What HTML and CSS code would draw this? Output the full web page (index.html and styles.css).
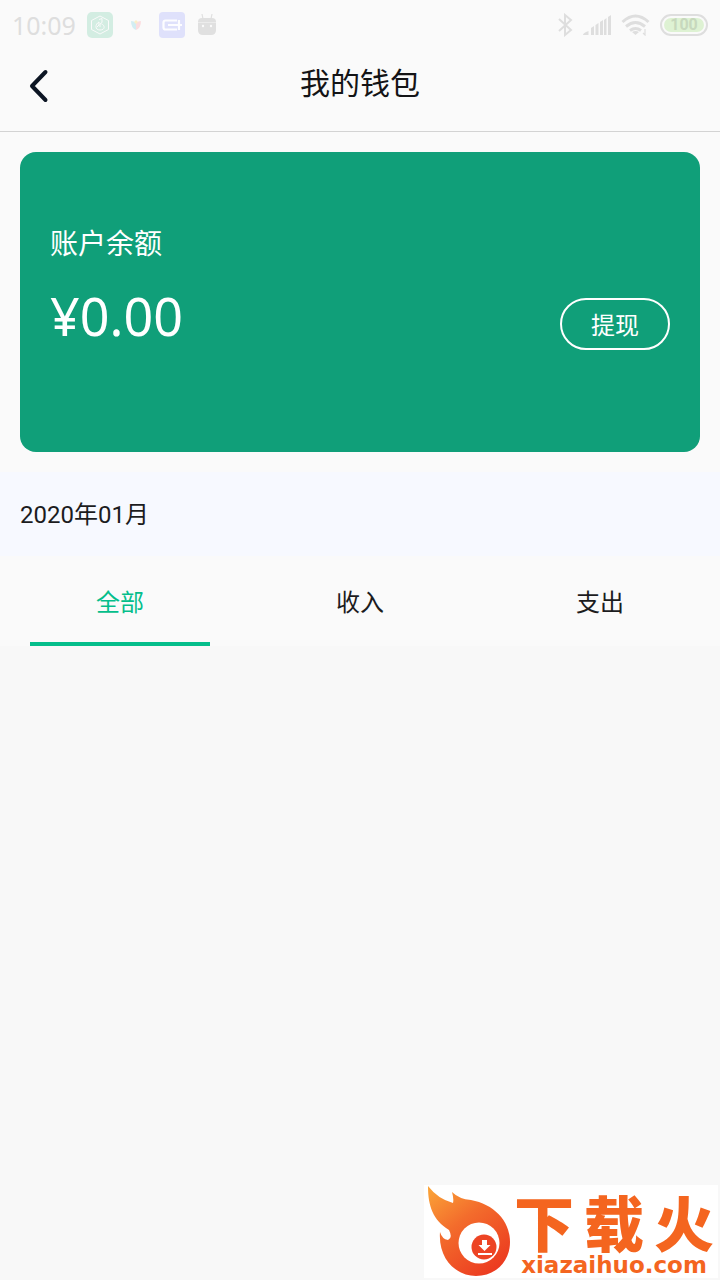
FILE: index.html
```html
<!DOCTYPE html>
<html lang="zh-CN">
<head>
<meta charset="utf-8">
<meta name="viewport" content="width=device-width, initial-scale=1">
<title>我的钱包</title>
<link rel="stylesheet" href="styles.css">
</head>
<body>
<div class="page">
  <div class="status">
    <div class="status-left">
      <span class="clock">10:09</span>
      <svg width="26" height="26" viewBox="0 0 26 26" fill="none" stroke="#fafafa"><rect width="26" height="26" rx="5" fill="#d3ede2" stroke="none"/><path d="M13 4l8.500 4.500v9L13 22l-8.500-4.500v-9z"/><path d="M12 7.500l3-1v4l-2 1.500v3M12 10c-4 2-4.500 8 1 8s5-5 1.500-6M12 10v3l-2 2"/></svg>
      <svg width="10" height="10" viewBox="0 0 10 10"><path d="M5 3v7Q0 8 0 1Q3 1 5 3z" fill="#d3edf2"/><path d="M5 3v7Q10 8 10 1Q7 1 5 3z" fill="#fbdde0"/><path d="M5 0l2 2-2 2-2-2z" fill="#fbeec8"/></svg>
      <svg width="26" height="26" viewBox="0 0 26 26"><rect width="26" height="26" rx="4" fill="#dfe1fb"/><path d="M18 8.500H6.500Q4.500 8.500 4.500 10.500v5Q4.500 17.500 6.500 17.500H18M9 13h14M20 8v10" fill="none" stroke="#fdfdff" stroke-width="2.200"/></svg>
      <svg width="18" height="22" viewBox="0 0 18 22"><path d="M0 8Q0 4 4 4h10q4 0 4 4v8q0 5-5 5H5q-5 0-5-5z" fill="#e0e0e0"/><path d="M4 0l1 5M14 0l-1 5" stroke="#e0e0e0" stroke-width="1.200"/><path d="M0 8.500h18" stroke="#ececec"/><circle cx="5" cy="12" r="1.200" fill="#fafafa"/><circle cx="13" cy="12" r="1.200" fill="#fafafa"/></svg>
    </div>
    <div class="status-right">
      <svg width="15" height="24" viewBox="0 0 15 24" fill="none" stroke="#dedede" stroke-width="2"><path d="M1 6l12 11-6 5V2l6 5L1 18"/></svg>
      <svg width="28" height="20" viewBox="0 0 28 20" fill="#dedede"><path d="M0 20q0-2 5.500-4v4zM8 13l3-2v9H8zM12.500 10l3-2v12h-3zM17 7l3-2v15h-3zM21 5l2.500-2v17H21zM25 2l3-2v20h-3z"/></svg>
      <svg width="29" height="22" viewBox="0 0 29 22" fill="none" stroke="#dedede" stroke-width="3"><path d="M1.500 8Q14.500-4 27.500 8M5 12.500q9.500-8 19 0M9 16.500q5.500-4 11 0"/><path d="M11 18q3.500-2 7 0l-3.500 3z" fill="#dedede" stroke="none"/><path d="M24 15v6l-2-2" stroke-width="1.200"/></svg>
      <span class="battery"><span class="charge">100</span></span>
    </div>
  </div>
  <header class="header">
    <button class="back" aria-label="返回"><svg width="20" height="34" viewBox="0 0 20 34"><path d="M16.500 3L3 17l13.500 14" fill="none" stroke="#0c1523" stroke-width="4" stroke-linecap="round" stroke-linejoin="round"/></svg></button>
    <h1 class="title">我的钱包</h1>
  </header>
  <main>
    <section class="card">
      <div class="balance">
        <p class="label">账户余额</p>
        <p class="amount">¥0.00</p>
      </div>
      <button class="withdraw">提现</button>
    </section>
    <div class="month">2020年01月</div>
    <nav class="tabs">
      <button class="tab tab-active">全部</button>
      <button class="tab">收入</button>
      <button class="tab">支出</button>
    </nav>
  </main>
  <footer class="brand">
    <svg class="flame" width="84" height="90" viewBox="0 0 84 90">
      <defs><linearGradient id="fire" x1="0" y1="0" x2=".7" y2="1"><stop offset="0" stop-color="#fba638"/><stop offset=".45" stop-color="#f36c2c"/><stop offset="1" stop-color="#ec3c20"/></linearGradient></defs>
      <path d="M0 0Q10 13 25 17Q26 13 24 6Q31 13 43 14C65 18 82 34 82 56C82 76 67 90 48 90C28 90 10 73 12 46Q14 53 20 54Q25 52 21 44C5 34 0 20 0 0z" fill="url(#fire)"/>
      <circle cx="51" cy="57" r="20.500" fill="#fff"/><circle cx="56" cy="61" r="12.500" fill="#ed4424"/>
      <path d="M54 54h5v5h3.500l-6 6-6-6H54zM50 67h14v2H50z" fill="#fff"/>
    </svg>
    <div class="brand-text">
      <div class="brand-name"><span>下</span><span>载</span><span>火</span></div>
      <div class="brand-site">xiazaihuo.com</div>
    </div>
  </footer>
</div>
</body>
</html>
```
FILE: styles.css
```css
* { box-sizing: border-box; }
body {
  margin: 0;
  background: #f8f8f8;
  color: #1c1c1e;
  font-family: Roboto, "Noto Sans CJK SC", sans-serif;
}
button {
  margin: 0;
  padding: 0;
  border: 0;
  background: none;
  color: inherit;
  font: inherit;
}
h1, p { margin: 0; font-weight: 400; }
svg { display: block; }
.page { min-height: 100vh; display: flex; flex-direction: column; }
.status {
  display: flex;
  justify-content: space-between;
  align-items: center;
  height: 50px;
  padding: 0 12px;
  background: #fafafa;
}
.status-left { display: flex; align-items: center; gap: 13px; }
.status-left svg:nth-of-type(2) { margin: 0 5px; }
.clock {
  width: 62px;
  color: #dedede;
  font: 25px/36px "Noto Sans", sans-serif;
  white-space: nowrap;
}
.status-right { display: flex; align-items: center; gap: 10px; }
.battery {
  width: 48px;
  height: 22px;
  padding: 2px;
  border: 2px solid #dedede;
  border-radius: 11px;
}
.charge {
  display: block;
  border-radius: 7px;
  background: #def2d3;
  color: #c7d8bd;
  font-size: 16px;
  font-weight: 700;
  line-height: 14px;
  text-align: center;
}
.header {
  display: grid;
  grid-template-columns: 1fr auto 1fr;
  align-items: center;
  height: 82px;
  padding: 0 29px 14px;
  border-bottom: 1px solid #d3d3d3;
  background: #fafafa;
}
.back { justify-self: start; padding-top: 4px; }
.title { color: #141416; font-size: 30px; line-height: 44px; }
main { background: #fafafa; }
.card {
  display: flex;
  justify-content: space-between;
  align-items: flex-end;
  height: 300px;
  margin: 20px;
  padding: 0 30px 102px;
  border-radius: 16px;
  background: #109f79;
  color: #fff;
}
.balance { padding-bottom: 3px; }
.label { font-size: 28px; line-height: 40px; margin-bottom: 20px; }
.amount { font: 52px/62px "Noto Sans", sans-serif; }
.withdraw {
  width: 110px;
  height: 52px;
  padding-bottom: 2px;
  border: 2px solid #fff;
  border-radius: 26px;
  font-size: 24px;
}
.month {
  padding: 23px 20px 21px;
  background: #f7f9ff;
  font-size: 24px;
  line-height: 40px;
}
.tabs { display: grid; grid-template-columns: repeat(3, 1fr); }
.tab {
  height: 90px;
  margin: 0 30px;
  padding-top: 7px;
  border-bottom: 4px solid transparent;
  font-size: 24px;
  line-height: 36px;
}
.tab-active { border-color: #05be8b; color: #05be8b; }
.brand {
  display: flex;
  align-self: flex-end;
  gap: 2px;
  margin: auto 2px 2px 0;
  padding: 1px 4px 2px;
  background: #fff;
  color: #f4651f;
}
.brand-text { width: 200px; padding-top: 4px; }
.brand-name {
  display: flex;
  justify-content: space-between;
  font-family: "Noto Sans CJK SC", sans-serif;
  font-size: 60px;
  font-weight: 900;
  line-height: 62px;
}
.brand-site {
  padding-top: 2px;
  font: bold 23px/22px "DejaVu Sans", sans-serif;
  text-align: center;
}
```
